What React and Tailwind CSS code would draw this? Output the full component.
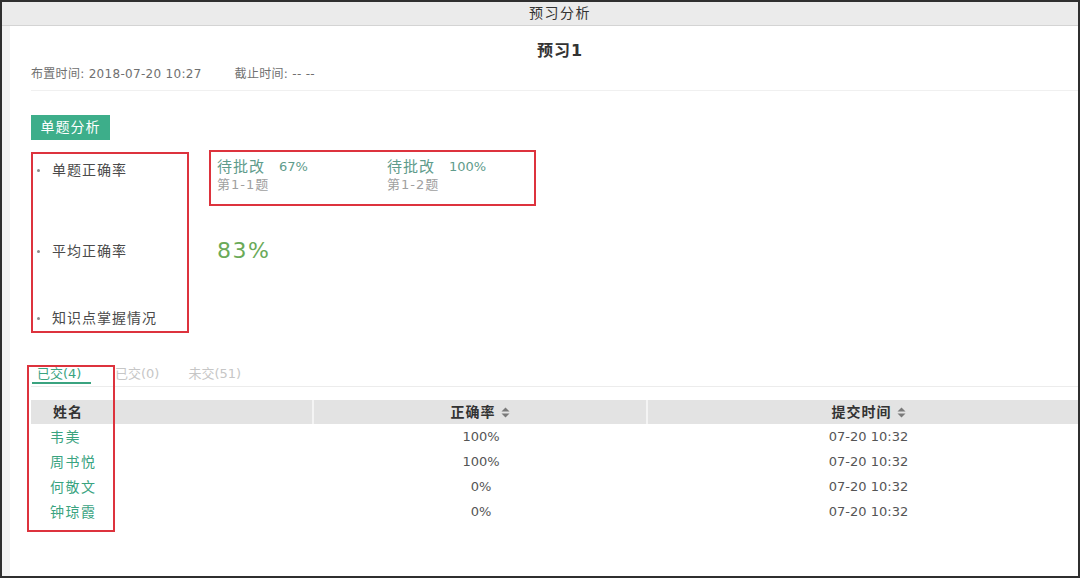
import React from "react";

const font = { fontFamily: '"DejaVu Sans", "Noto Sans CJK SC", sans-serif' };

function SortIcon() {
  return (
    <svg width="9" height="11" viewBox="0 0 9 11" className="inline-block ml-[5px]">
      <path d="M4.5 0.5 L8.5 4.5 L0.5 4.5 Z" fill="#7a7a7a" />
      <path d="M0.5 6.5 L8.5 6.5 L4.5 10.5 Z" fill="#7a7a7a" />
    </svg>
  );
}

function Bullet({ top, children }) {
  return (
    <div className="absolute left-[4px] flex items-center h-[20px]" style={{ top }}>
      <span className="w-[3px] h-[3px] rounded-full bg-[#8a8a8a] mr-[12px]" />
      <span className="text-[14px] tracking-[1px] text-[#4a4a4a]">{children}</span>
    </div>
  );
}

const rows = [
  ["韦美", "100%", "07-20 10:32"],
  ["周书悦", "100%", "07-20 10:32"],
  ["何敬文", "0%", "07-20 10:32"],
  ["钟琼霞", "0%", "07-20 10:32"],
];

export default function App() {
  return (
    <div
      className="w-[1080px] h-[578px] overflow-hidden border-2 border-[#2f2f2f] bg-white flex flex-col text-[#444]"
      style={font}
    >
      {/* title bar */}
      <div className="h-[24px] shrink-0 bg-[#ebebeb] border-b border-[#d4d4d4] flex items-center justify-center pl-[40px] text-[14px] tracking-[1.5px] text-[#333]">
        预习分析
      </div>

      <div className="flex flex-1 min-h-0">
        <div className="w-[8px] bg-[#f3f3f3] shrink-0" />
        <div className="flex-1 min-w-0 overflow-hidden">
          <div className="w-[1079px] flex flex-col pl-[21px]">
            {/* heading */}
            <div className="mt-[15px] h-[20px] flex items-center justify-center text-[16px] font-bold tracking-[1px] text-[#333]">
              预习1
            </div>
            <div className="mt-[5px] h-[16px] flex items-center text-[12px] tracking-[0.3px] text-[#707070]">
              <span>布置时间: 2018-07-20 10:27</span>
              <span className="ml-[33px]">截止时间: -- --</span>
            </div>
            <div className="mt-[8px] h-px bg-[#f0f0f0]" />

            {/* button */}
            <div className="mt-[24px]">
              <div className="w-[79px] h-[25px] bg-[#3dae8a] text-white text-[14px] tracking-[1px] flex items-center justify-center">
                单题分析
              </div>
            </div>

            {/* analysis */}
            <div className="flex mt-[10px]">
              <div className="w-[158px] h-[181px] mt-[2px] border-2 border-[#dd333d] relative">
                <Bullet top="6px">单题正确率</Bullet>
                <Bullet top="87px">平均正确率</Bullet>
                <Bullet top="154px">知识点掌握情况</Bullet>
              </div>
              <div className="ml-[20px] flex flex-col">
                <div className="w-[327px] h-[56px] border-2 border-[#dd333d] flex pl-[6px] pt-[5px]">
                  <div className="w-[170px]">
                    <div className="h-[20px] flex items-center text-[15px] tracking-[1px] text-[#5f9c8c]">
                      待批改<span className="ml-[14px] text-[13px] tracking-normal">67%</span>
                    </div>
                    <div className="h-[16px] flex items-center text-[13px] tracking-[1px] text-[#a0a0a0]">第1-1题</div>
                  </div>
                  <div>
                    <div className="h-[20px] flex items-center text-[15px] tracking-[1px] text-[#5f9c8c]">
                      待批改<span className="ml-[14px] text-[13px] tracking-normal">100%</span>
                    </div>
                    <div className="h-[16px] flex items-center text-[13px] tracking-[1px] text-[#a0a0a0]">第1-2题</div>
                  </div>
                </div>
                <div className="mt-[29px] ml-[8px] h-[30px] flex items-center text-[22px] tracking-[1.5px] text-[#6aaa58]">83%</div>
              </div>
            </div>

            {/* tabs */}
            <div className="mt-[29px] relative">
              <div className="flex h-[25px] border-b border-[#ececec] text-[13px] relative">
                <div className="relative w-[60px] pl-[6px] pt-[2px] text-[#3aa37f]">
                  已交(4)
                  <div className="absolute left-[1px] bottom-[2px] w-[59px] h-[2px] bg-[#3aa37f]" />
                </div>
                <div className="ml-[24px] pt-[2px] text-[#c6c6c6]">已交(0)</div>
                <div className="ml-[29px] pt-[2px] text-[#c6c6c6]">未交(51)</div>
              </div>
              <div className="absolute left-[-4px] top-[3px] w-[88px] h-[167px] border-2 border-[#dd333d] pointer-events-none z-10" />

              {/* table */}
              <div className="mt-[13px]">
                <div className="flex h-[24px] bg-[#e3e3e3] text-[14px] font-bold tracking-[1px] text-[#333]">
                  <div className="w-[283px] pl-[22px] flex items-center border-r-2 border-[#f4f4f4]">姓名</div>
                  <div className="w-[334px] flex items-center justify-center border-r-2 border-[#f4f4f4]">
                    正确率<SortIcon />
                  </div>
                  <div className="flex-1 flex items-center justify-center">
                    提交时间<SortIcon />
                  </div>
                </div>
                {rows.map((r) => (
                  <div key={r[0]} className="flex h-[25px] pt-[1px] items-center text-[13px] text-[#555]">
                    <div className="w-[283px] pl-[19px] text-[14px] tracking-[1.5px] text-[#3aa37f]">{r[0]}</div>
                    <div className="w-[334px] text-center">{r[1]}</div>
                    <div className="flex-1 text-center">{r[2]}</div>
                  </div>
                ))}
              </div>
            </div>
          </div>
        </div>
      </div>
    </div>
  );
}
